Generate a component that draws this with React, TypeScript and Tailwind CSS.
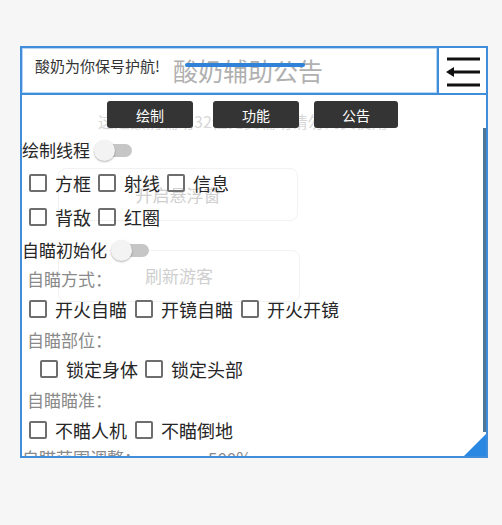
import React from 'react';

const Box = () => (
  <span className="inline-block w-[18px] h-[18px] shrink-0 rounded-[2px] border-2 border-[#6e6e6e]" />
);

const Check = ({ label }: { label: string }) => (
  <div className="flex items-center gap-[8px]">
    <Box />
    <span>{label}</span>
  </div>
);

const Toggle = () => (
  <div className="relative ml-[4px] h-[21px] w-[38px]">
    <div className="absolute left-[8px] right-0 top-[4px] h-[13px] rounded-full bg-[#c6c6c6]" />
    <div className="absolute left-0 top-0 h-[21px] w-[21px] rounded-full bg-[#f3f3f3] shadow-[0_1px_2px_rgba(0,0,0,0.3)]" />
  </div>
);

const Tab = ({ label, w }: { label: string; w: string }) => (
  <button className={`relative z-10 flex h-[27px] ${w} items-center justify-center rounded-[3px] bg-[#343434] text-[14px] text-white`}>
    {label}
  </button>
);

export default function App() {
  return (
    <div className="h-[525px] w-full bg-[#f6f6f6] pl-[20px] pt-[46px] font-['Noto_Sans_CJK_SC','Noto_Sans',sans-serif]">
      <div className="relative flex h-[412px] w-[468px] flex-col overflow-hidden border-2 border-[#3f8ddb] bg-white">
        {/* header */}
        <div className="flex h-[47px] shrink-0 border-b-2 border-[#3f8ddb]">
          <div className="relative flex-1 border border-[#b8d6f3]">
            <span className="absolute left-[12px] top-[7px] text-[15px] leading-[20px] text-[#333]">酸奶为你保号护航!</span>
            <span className="absolute left-[150px] top-[7px] text-[25px] leading-[28px] text-[#b0b0b0]">酸奶辅助公告</span>
            <span className="absolute left-[162px] top-[14px] z-10 h-[4px] w-[120px] rounded-full bg-[#2f82d8]" />
          </div>
          <div className="w-[49px] border-l-2 border-[#3f8ddb]">
            <svg width="47" height="45" viewBox="0 0 47 45">
              <line x1="8" y1="11" x2="41" y2="11" stroke="#111" strokeWidth="3" />
              <line x1="15" y1="24" x2="41" y2="24" stroke="#111" strokeWidth="3" />
              <polygon points="7,24 15,19 15,29" fill="#111" />
              <line x1="8" y1="37" x2="41" y2="37" stroke="#111" strokeWidth="3" />
            </svg>
          </div>
        </div>

        {/* content */}
        <div className="relative flex-1 text-[18px] leading-[22px] text-[#262626]">
          <span className="absolute left-[76px] top-[15px] whitespace-nowrap text-[16px] text-[#d8d8d8]">这是酸奶辅助32位免费辅助请勿倒卖使用</span>
          <div className="absolute left-[36px] top-[73px] flex h-[53px] w-[240px] items-center justify-center rounded-lg border border-[#f2f2f2] text-[17px] text-[#cfcfcf]">
            开启悬浮窗
          </div>
          <div className="absolute left-[36px] top-[155px] flex h-[52px] w-[242px] items-center justify-center rounded-lg border border-[#f2f2f2] text-[17px] text-[#cfcfcf]">
            刷新游客
          </div>

          <div className="relative mt-[6px] flex pl-[85px]">
            <Tab label="绘制" w="w-[86px]" />
            <div className="ml-[20px]"><Tab label="功能" w="w-[86px]" /></div>
            <div className="ml-[15px]"><Tab label="公告" w="w-[84px]" /></div>
          </div>

          <div className="relative mt-[6px]">
            <div className="flex h-[32px] items-center text-[17px]">
              <span>绘制线程</span>
              <Toggle />
            </div>
            <div className="flex h-[34px] items-center gap-[7px] pl-[7px]">
              <Check label="方框" />
              <Check label="射线" />
              <Check label="信息" />
            </div>
            <div className="flex h-[34px] items-center gap-[7px] pl-[7px]">
              <Check label="背敌" />
              <Check label="红圈" />
            </div>
            <div className="flex h-[32px] items-center text-[17px]">
              <span>自瞄初始化</span>
              <Toggle />
            </div>
            <div className="flex h-[26px] items-center pl-[5px] text-[17px] text-[#8a8a8a]">自瞄方式：</div>
            <div className="flex h-[34px] items-center gap-[8px] pl-[7px]">
              <Check label="开火自瞄" />
              <Check label="开镜自瞄" />
              <Check label="开火开镜" />
            </div>
            <div className="flex h-[28px] items-center pl-[5px] text-[17px] text-[#8a8a8a]">自瞄部位：</div>
            <div className="flex h-[30px] items-center gap-[7px] pl-[18px]">
              <Check label="锁定身体" />
              <Check label="锁定头部" />
            </div>
            <div className="flex h-[32px] items-center pl-[5px] text-[17px] text-[#8a8a8a]">自瞄瞄准：</div>
            <div className="flex h-[28px] items-center gap-[8px] pl-[7px]">
              <Check label="不瞄人机" />
              <Check label="不瞄倒地" />
            </div>
            <div className="flex h-[28px] items-center text-[17px] text-[#8a8a8a]">
              <span className="w-[186px]">自瞄范围调整：</span>
              <span>500%</span>
            </div>
          </div>
        </div>

        {/* scrollbar thumb */}
        <div className="absolute bottom-[24px] right-0 top-[80px] w-[3px] bg-[#4d7699]" />
        {/* resize handle */}
        <svg className="absolute bottom-0 right-0" width="22" height="22" viewBox="0 0 22 22">
          <polygon points="22,0 22,22 0,22" fill="#2a88e2" />
        </svg>
      </div>
    </div>
  );
}
